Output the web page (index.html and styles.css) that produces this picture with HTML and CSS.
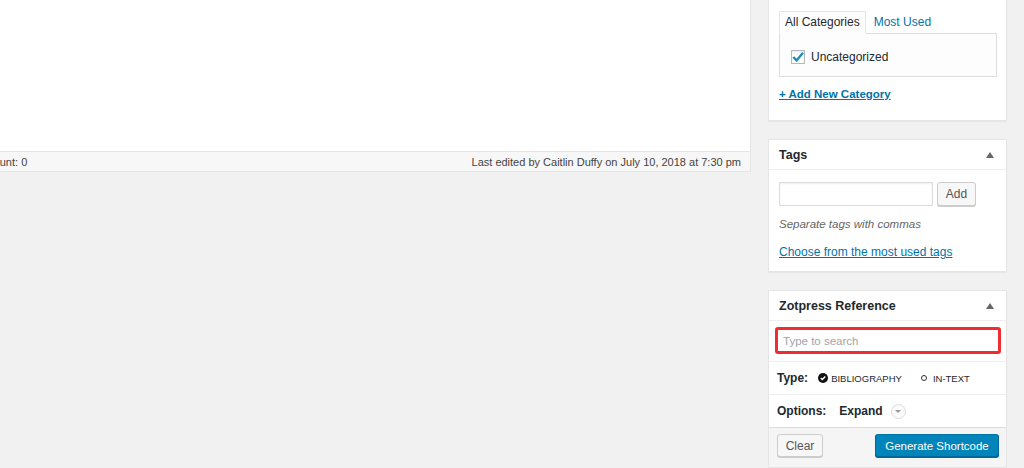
FILE: index.html
```html
<!DOCTYPE html>
<html>
<head>
<meta charset="utf-8">
<link rel="stylesheet" href="styles.css">
</head>
<body>
<div class="page">
  <div class="main">
    <div class="editor"></div>
    <div class="status">
      <span class="count">Word count: 0</span>
      <span class="edited">Last edited by Caitlin Duffy on July 10, 2018 at 7:30 pm</span>
    </div>
  </div>
  <div class="side">
    <div class="box cats">
      <div class="tabs">
        <span class="tab active">All Categories</span>
        <span class="tab link">Most Used</span>
      </div>
      <div class="panel">
        <label class="check"><span class="cb"><svg width="12" height="12" viewBox="0 0 12 12"><path d="M1.3 6 L4.6 9.4 L11 1.8" fill="none" stroke="#1e8cbe" stroke-width="2.4"/></svg></span>Uncategorized</label>
      </div>
      <div class="addnew">+ Add New Category</div>
    </div>

    <div class="box tags">
      <div class="hd"><span>Tags</span><span class="tri"></span></div>
      <div class="tagbody">
        <div class="tagrow">
          <input class="tagin" type="text">
          <button class="btn add">Add</button>
        </div>
        <div class="hint">Separate tags with commas</div>
        <div class="most">Choose from the most used tags</div>
      </div>
    </div>

    <div class="box zot">
      <div class="hd"><span>Zotpress Reference</span><span class="tri"></span></div>
      <div class="search"><input class="searchin" type="text" placeholder="Type to search"></div>
      <div class="row typerow">
        <span class="lbl">Type:</span>
        <span class="opt"><span class="dot on"><svg width="10" height="10" viewBox="0 0 10 10"><path d="M2.8 5.1 L4.3 6.6 L7.3 3.4" fill="none" stroke="#fff" stroke-width="1.4"/></svg></span>BIBLIOGRAPHY</span>
        <span class="opt opt2"><span class="dot off"></span>IN-TEXT</span>
      </div>
      <div class="row optrow">
        <span class="lbl">Options:</span>
        <span class="expand">Expand</span>
        <span class="dd"><span class="ddtri"></span></span>
      </div>
      <div class="foot">
        <button class="btn clear">Clear</button>
        <button class="btn primary">Generate Shortcode</button>
      </div>
    </div>
  </div>
</div>
</body>
</html>
```
FILE: styles.css
```css
* { box-sizing: border-box; }
html, body { margin: 0; padding: 0; }
body {
  background: #f1f1f1;
  font-family: "Liberation Sans", Arial, sans-serif;
  font-size: 12px;
  color: #23282d;
  width: 1024px;
  height: 468px;
  overflow: hidden;
}
.page {
  display: flex;
  align-items: flex-start;
}
.main {
  width: 751px;
  flex: none;
}
.editor {
  height: 151px;
  background: #fff;
  border-right: 1px solid #e5e5e5;
}
.status {
  height: 21px;
  background: #f7f7f7;
  border-top: 1px solid #e5e5e5;
  border-bottom: 1px solid #e5e5e5;
  border-right: 1px solid #e5e5e5;
  display: flex;
  justify-content: space-between;
  align-items: center;
  font-size: 11px;
  color: #444;
  overflow: hidden;
  white-space: nowrap;
}
.count { margin-left: -41px; }
.edited { padding-right: 9px; }

.side {
  margin-left: 17px;
  width: 239px;
  flex: none;
  display: flex;
  flex-direction: column;
  gap: 18px;
}
.box {
  background: #fff;
  border: 1px solid #e5e5e5;
  box-shadow: 0 1px 1px rgba(0,0,0,0.04);
}
.cats {
  border-top: none;
  height: 121px;
  padding: 11px 10px 0 10px;
}
.tabs {
  display: flex;
  align-items: flex-end;
  height: 22px;
}
.tab {
  padding: 0 6px;
  line-height: 21px;
}
.tab.active {
  border: 1px solid #e5e5e5;
  border-bottom: 1px solid #fdfdfd;
  background: #fdfdfd;
  height: 23px;
  margin-bottom: -1px;
  position: relative;
  z-index: 1;
  padding: 0 5px;
}
.tab.link { color: #0073aa; padding-left: 8px; }
.panel {
  height: 44px;
  border: 1px solid #ddd;
  background: #fdfdfd;
  display: flex;
  align-items: center;
  padding: 3px 0 0 11px;
  width: 218px;
}
.check {
  display: flex;
  align-items: center;
  gap: 6px;
}
.cb {
  width: 14px;
  height: 14px;
  border: 1px solid #b4b9be;
  background: #fff;
  box-shadow: inset 0 1px 2px rgba(0,0,0,0.1);
  display: flex;
  align-items: center;
  justify-content: center;
}
.addnew {
  margin-top: 11px;
  color: #0073aa;
  font-size: 11.5px;
  font-weight: bold;
  text-decoration: underline;
}

.hd {
  height: 30px;
  border-bottom: 1px solid #eee;
  display: flex;
  align-items: center;
  justify-content: space-between;
  padding: 0 12px 0 10px;
  font-size: 12.5px;
  font-weight: bold;
  color: #23282d;
}
.tri {
  width: 0;
  height: 0;
  border-left: 4px solid transparent;
  border-right: 4px solid transparent;
  border-bottom: 6px solid #666;
}
.tags { height: 133px; }
.tagbody { padding: 12px 10px 0 10px; }
.tagrow { display: flex; gap: 4px; }
.tagin {
  width: 154px;
  height: 24px;
  border: 1px solid #ddd;
  box-shadow: inset 0 1px 2px rgba(0,0,0,0.07);
  margin: 0;
  padding: 0 4px;
  font: inherit;
}
.btn {
  font-family: "Liberation Sans", Arial, sans-serif;
  font-size: 12px;
  height: 24px;
  padding: 0 9px;
  background: #f7f7f7;
  border: 1px solid #ccc;
  border-radius: 3px;
  box-shadow: 0 1px 0 #ccc;
  color: #555;
  margin: 0;
}
.add { width: 39px; padding: 0; }
.hint {
  margin-top: 12px;
  font-style: italic;
  font-size: 11.5px;
  color: #666;
}
.most {
  margin-top: 15px;
  color: #0073aa;
  text-decoration: underline;
}

.search {
  height: 40px;
  padding: 6px 5px 0 6px;
}
.searchin {
  width: 226px;
  height: 27px;
  border: 3px solid #ee2d33;
  border-radius: 3px;
  margin: 0;
  padding: 0 5px;
  font: inherit;
  font-size: 11.5px;
  background: #fff;
}
.searchin::placeholder { color: #a0a5aa; }
.row {
  display: flex;
  align-items: center;
  border-top: 1px solid #eee;
  padding-left: 8px;
}
.typerow { height: 33px; }
.optrow { height: 33px; }
.lbl { font-weight: bold; }
.opt {
  display: flex;
  align-items: center;
  font-size: 9.5px;
  margin-left: 10px;
  gap: 3px;
}
.opt2 { margin-left: 19px; gap: 6px; }
.dot {
  display: flex;
  align-items: center;
  justify-content: center;
  border-radius: 50%;
}
.dot.on { width: 10px; height: 10px; background: #111; }
.dot.off { width: 6px; height: 6px; border: 1.5px solid #333; }
.expand { font-weight: bold; margin-left: 13px; }
.dd {
  width: 15px;
  height: 15px;
  border: 1px solid #ddd;
  border-radius: 50%;
  margin-left: 8px;
  display: flex;
  align-items: center;
  justify-content: center;
  background: #fafafa;
}
.ddtri {
  width: 0;
  height: 0;
  border-left: 3px solid transparent;
  border-right: 3px solid transparent;
  border-top: 3px solid #999;
  margin-top: 1px;
}
.foot {
  height: 40px;
  background: #f5f5f5;
  border-top: 1px solid #ddd;
  display: flex;
  justify-content: space-between;
  align-items: flex-start;
  padding: 6px 7px 0 8px;
}
.clear { width: 46px; height: 23px; padding: 0; }
.primary {
  width: 124px;
  height: 23px;
  padding: 0;
  font-size: 11.5px;
  background: #0085ba;
  border-color: #0073aa #006799 #006799;
  box-shadow: 0 1px 0 #006799;
  color: #fff;
}
```
